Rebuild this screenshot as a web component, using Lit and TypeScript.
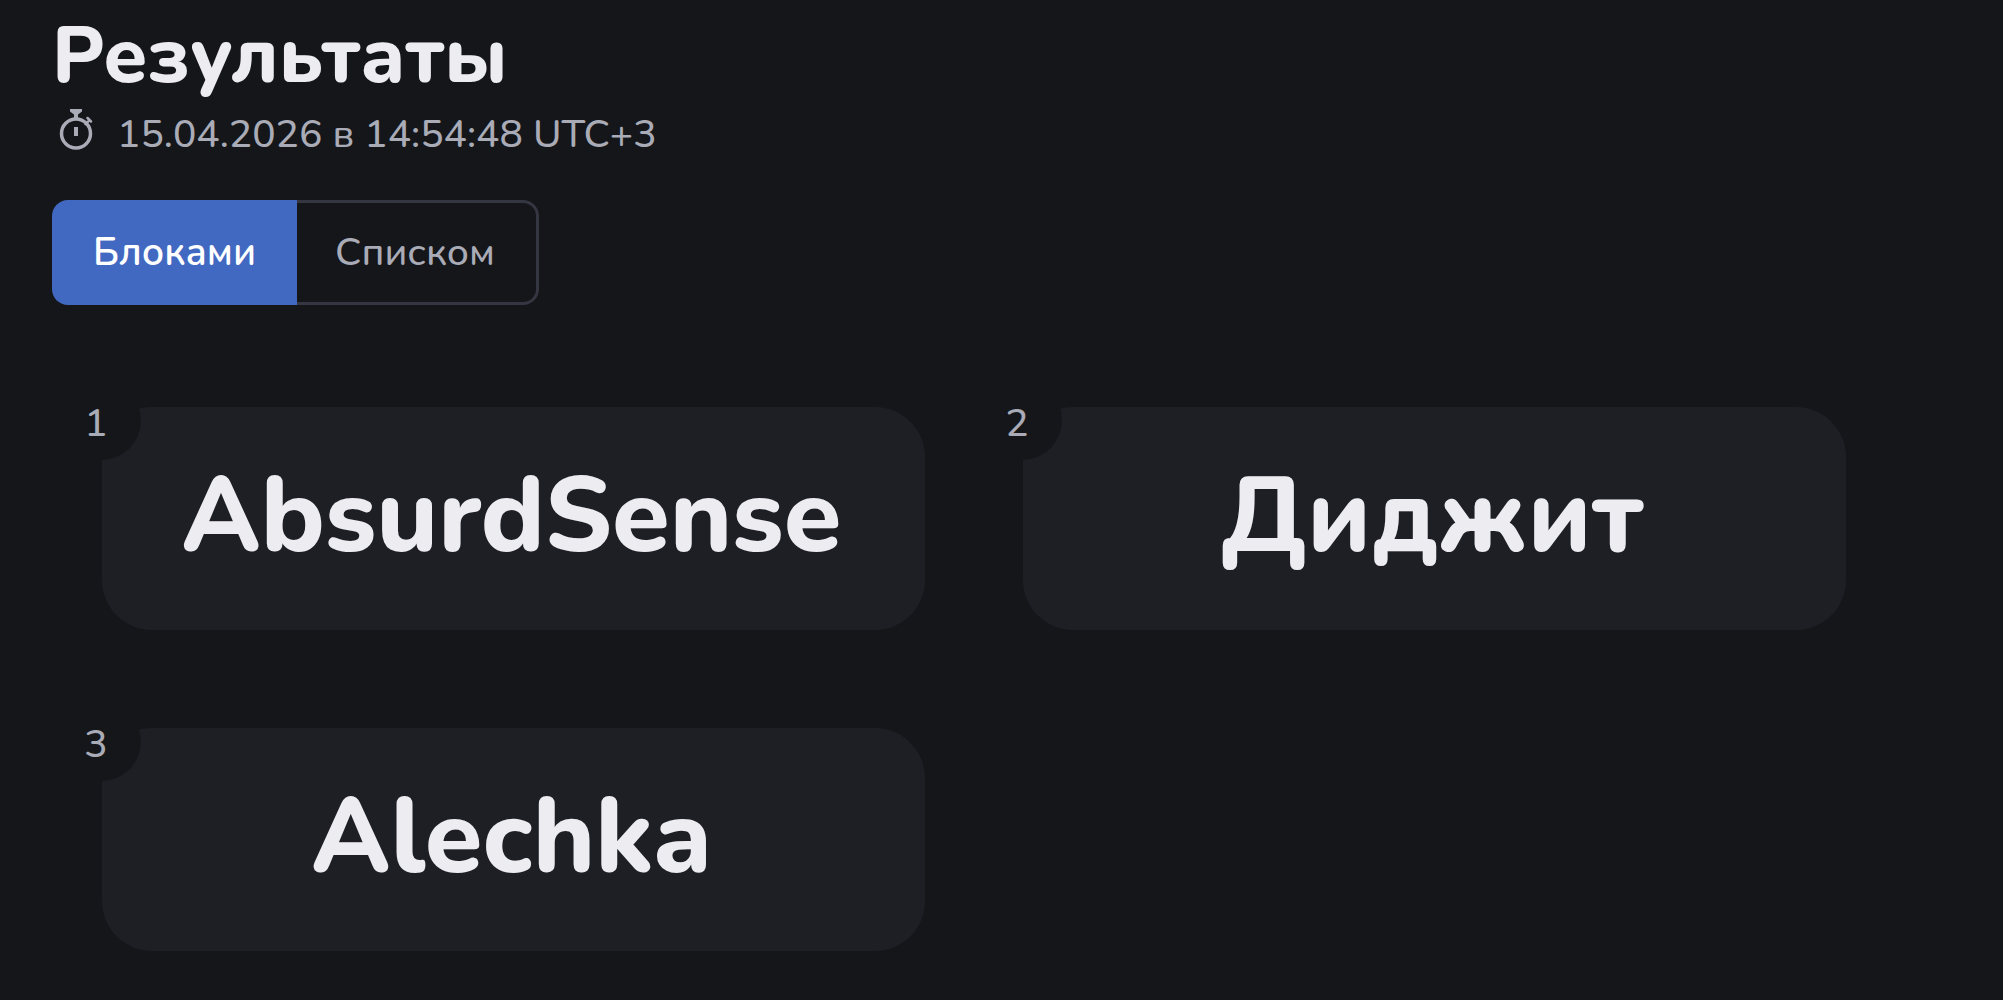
import { LitElement, html, css } from "lit";
import { customElement, property, state } from "lit/decorators.js";
import { classMap } from "lit/directives/class-map.js";

type View = "blocks" | "list";

@customElement("result-card")
class ResultCard extends LitElement {
  @property({ type: Number }) place = 0;
  @property() name = "";

  static styles = css`
    :host {
      display: block;
      position: relative;
      box-sizing: border-box;
      min-width: 0;
      padding: 42px 50px 45px 46px;
      border-radius: 50px;
      background: #1e1f25;
      text-align: center;
    }
    .name {
      margin: 0;
      color: #ececf1;
      font-size: 105px;
      font-weight: 800;
      line-height: 136px;
      overflow-wrap: anywhere;
    }
    .place {
      position: absolute;
      top: -26px;
      left: -51px;
      display: grid;
      place-items: center;
      box-sizing: border-box;
      width: 90px;
      height: 79px;
      padding-top: 6px;
      border-radius: 40px;
      background: #15161a;
      color: #a9abb6;
      font-size: 39px;
      font-weight: 500;
      line-height: 56px;
    }
  `;

  render() {
    return html`
      <span class="place">${this.place}</span>
      <h2 class="name">${this.name}</h2>
    `;
  }
}

@customElement("app-root")
class AppRoot extends LitElement {
  @state() private view: View = "blocks";

  private readonly names = ["AbsurdSense", "Диджит", "Alechka"];

  static styles = css`
    :host {
      display: block;
      box-sizing: border-box;
      min-height: 100vh;
      padding: 14px 52px 48px;
      background: #15161a;
      color: #ececf1;
      font-family: Nunito, "Open Sans", "Noto Sans", sans-serif;
      font-size: 39px;
      font-weight: 500;
    }
    .title {
      margin: 0;
      font-size: 79px;
      font-weight: 800;
      line-height: 84px;
    }
    .time {
      display: flex;
      align-items: center;
      gap: 23px;
      margin: 7px 0 0;
      padding-left: 6px;
      color: #a9abb6;
      line-height: 60px;
    }
    .clock {
      width: 36px;
      height: 44px;
      flex: none;
      margin-bottom: 12px;
    }
    .switch {
      display: inline-flex;
      margin-top: 35px;
    }
    .tab {
      box-sizing: border-box;
      height: 105px;
      padding: 0 41px 0 38px;
      border: 3px solid #343641;
      background: transparent;
      color: #a9abb6;
      font: inherit;
      cursor: pointer;
    }
    .tab:first-child {
      border-right: 0;
      border-radius: 16px 0 0 16px;
    }
    .tab:last-child {
      border-left: 0;
      border-radius: 0 16px 16px 0;
    }
    .active {
      border-color: #4269c1;
      background: #4269c1;
      color: #ffffff;
      font-weight: 600;
    }
    .results {
      display: grid;
      grid-template-columns: repeat(auto-fit, minmax(min(100%, 823px), 823px));
      gap: 98px;
      margin: 102px 0 0;
      padding: 0 0 0 50px;
    }
    .list {
      grid-template-columns: minmax(0, 1fr);
    }
  `;

  private tab(view: View, label: string) {
    const on = this.view === view;
    return html`<button
      type="button"
      class=${classMap({ tab: true, active: on })}
      aria-pressed=${on ? "true" : "false"}
      @click=${() => (this.view = view)}
    >${label}</button>`;
  }

  render() {
    return html`
      <h1 class="title">Результаты</h1>
      <p class="time">
        <svg class="clock" viewBox="0 0 36 44" fill="none" stroke="currentColor" aria-hidden="true">
          <circle cx="18" cy="26.500" r="14.500" stroke-width="3.500" />
          <path d="M12 2h12v2.500l-4 3v4h-4v-4l-4-3z" fill="currentColor" stroke="none" />
          <path d="M27.500 17l4-4M29.500 11l3.500 3.500" stroke-width="2.500" stroke-linecap="round" />
          <path d="M18 20v9" stroke-width="4" />
        </svg>
        <span>15.04.2026 в 14:54:48 UTC+3</span>
      </p>
      <div class="switch" role="group" aria-label="Результаты">
        ${this.tab("blocks", "Блоками")}${this.tab("list", "Списком")}
      </div>
      <section class=${classMap({ results: true, list: this.view === "list" })}>
        ${this.names.map(
          (name, i) => html`<result-card .place=${i + 1} .name=${name}></result-card>`
        )}
      </section>
    `;
  }
}
